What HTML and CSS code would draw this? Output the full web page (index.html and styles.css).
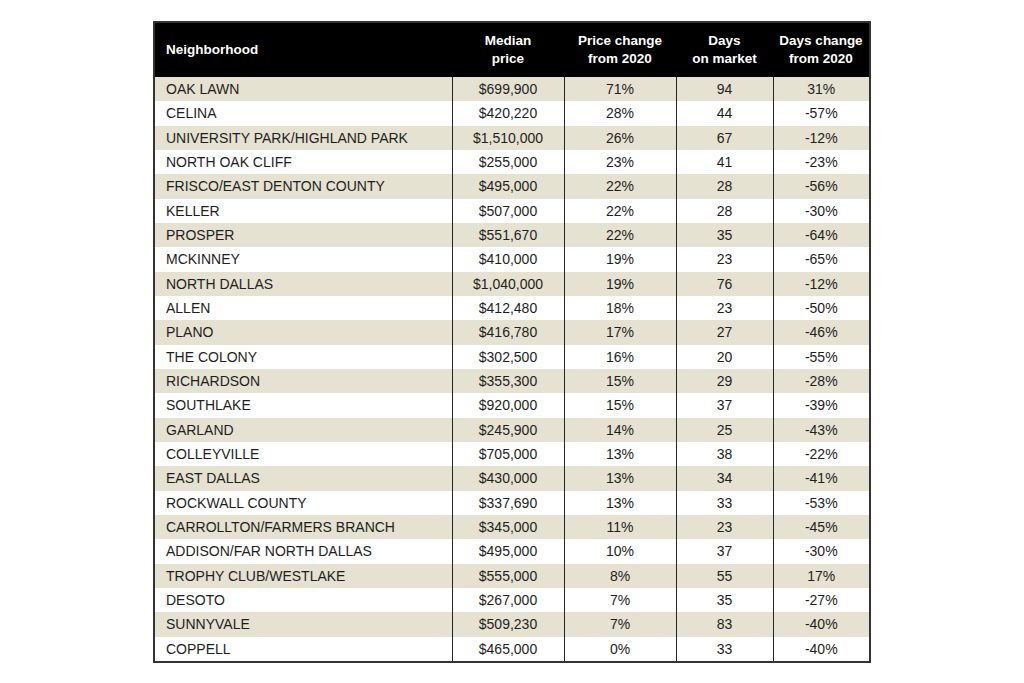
FILE: index.html
```html
<!DOCTYPE html>
<html lang="en">
<head>
<meta charset="utf-8">
<title>Neighborhood prices</title>
<link rel="stylesheet" href="styles.css">
</head>
<body>
<div class="page">
<table class="data">
  <thead>
    <tr>
      <th class="name">Neighborhood</th>
      <th>Median<br>price</th>
      <th>Price change<br>from 2020</th>
      <th>Days<br>on market</th>
      <th>Days change<br>from 2020</th>
    </tr>
  </thead>
  <tbody>
    <tr><td>OAK LAWN</td><td>$699,900</td><td>71%</td><td>94</td><td>31%</td></tr>
    <tr><td>CELINA</td><td>$420,220</td><td>28%</td><td>44</td><td>-57%</td></tr>
    <tr><td>UNIVERSITY PARK/HIGHLAND PARK</td><td>$1,510,000</td><td>26%</td><td>67</td><td>-12%</td></tr>
    <tr><td>NORTH OAK CLIFF</td><td>$255,000</td><td>23%</td><td>41</td><td>-23%</td></tr>
    <tr><td>FRISCO/EAST DENTON COUNTY</td><td>$495,000</td><td>22%</td><td>28</td><td>-56%</td></tr>
    <tr><td>KELLER</td><td>$507,000</td><td>22%</td><td>28</td><td>-30%</td></tr>
    <tr><td>PROSPER</td><td>$551,670</td><td>22%</td><td>35</td><td>-64%</td></tr>
    <tr><td>MCKINNEY</td><td>$410,000</td><td>19%</td><td>23</td><td>-65%</td></tr>
    <tr><td>NORTH DALLAS</td><td>$1,040,000</td><td>19%</td><td>76</td><td>-12%</td></tr>
    <tr><td>ALLEN</td><td>$412,480</td><td>18%</td><td>23</td><td>-50%</td></tr>
    <tr><td>PLANO</td><td>$416,780</td><td>17%</td><td>27</td><td>-46%</td></tr>
    <tr><td>THE COLONY</td><td>$302,500</td><td>16%</td><td>20</td><td>-55%</td></tr>
    <tr><td>RICHARDSON</td><td>$355,300</td><td>15%</td><td>29</td><td>-28%</td></tr>
    <tr><td>SOUTHLAKE</td><td>$920,000</td><td>15%</td><td>37</td><td>-39%</td></tr>
    <tr><td>GARLAND</td><td>$245,900</td><td>14%</td><td>25</td><td>-43%</td></tr>
    <tr><td>COLLEYVILLE</td><td>$705,000</td><td>13%</td><td>38</td><td>-22%</td></tr>
    <tr><td>EAST DALLAS</td><td>$430,000</td><td>13%</td><td>34</td><td>-41%</td></tr>
    <tr><td>ROCKWALL COUNTY</td><td>$337,690</td><td>13%</td><td>33</td><td>-53%</td></tr>
    <tr><td>CARROLLTON/FARMERS BRANCH</td><td>$345,000</td><td>11%</td><td>23</td><td>-45%</td></tr>
    <tr><td>ADDISON/FAR NORTH DALLAS</td><td>$495,000</td><td>10%</td><td>37</td><td>-30%</td></tr>
    <tr><td>TROPHY CLUB/WESTLAKE</td><td>$555,000</td><td>8%</td><td>55</td><td>17%</td></tr>
    <tr><td>DESOTO</td><td>$267,000</td><td>7%</td><td>35</td><td>-27%</td></tr>
    <tr><td>SUNNYVALE</td><td>$509,230</td><td>7%</td><td>83</td><td>-40%</td></tr>
    <tr><td>COPPELL</td><td>$465,000</td><td>0%</td><td>33</td><td>-40%</td></tr>
  </tbody>
</table>
</div>
</body>
</html>
```

FILE: styles.css
```css
html, body {
  margin: 0;
  padding: 0;
  background: #ffffff;
}

.page {
  padding-top: 21px;
  display: flex;
  justify-content: center;
}

.data {
  width: 718px;
  border-collapse: collapse;
  table-layout: fixed;
  font-family: "Liberation Sans", Arial, sans-serif;
  font-size: 14px;
  color: #1e1e1e;
  border: 2px solid #333333;
}

.data th {
  background: #000000;
  color: #ffffff;
  font-weight: bold;
  font-size: 13.5px;
  line-height: 18px;
  height: 54px;
  padding: 0 4px;
  text-align: center;
  vertical-align: middle;
}

.data th.name {
  text-align: left;
  padding-left: 11px;
  width: 282px;
}

.data th:nth-child(2),
.data th:nth-child(3) {
  width: 104px;
}

.data th:nth-child(4) {
  width: 89px;
}

.data td {
  height: 24.33px;
  padding: 0 4px;
  text-align: center;
  vertical-align: middle;
  border-left: 1.5px solid #262626;
  line-height: 16px;
  white-space: nowrap;
}

.data td:first-child {
  text-align: left;
  padding-left: 11px;
  border-left: none;
}

.data tbody tr:nth-child(odd) {
  background: #e6e2d1;
}

.data tbody tr:nth-child(even) {
  background: #ffffff;
}
```
